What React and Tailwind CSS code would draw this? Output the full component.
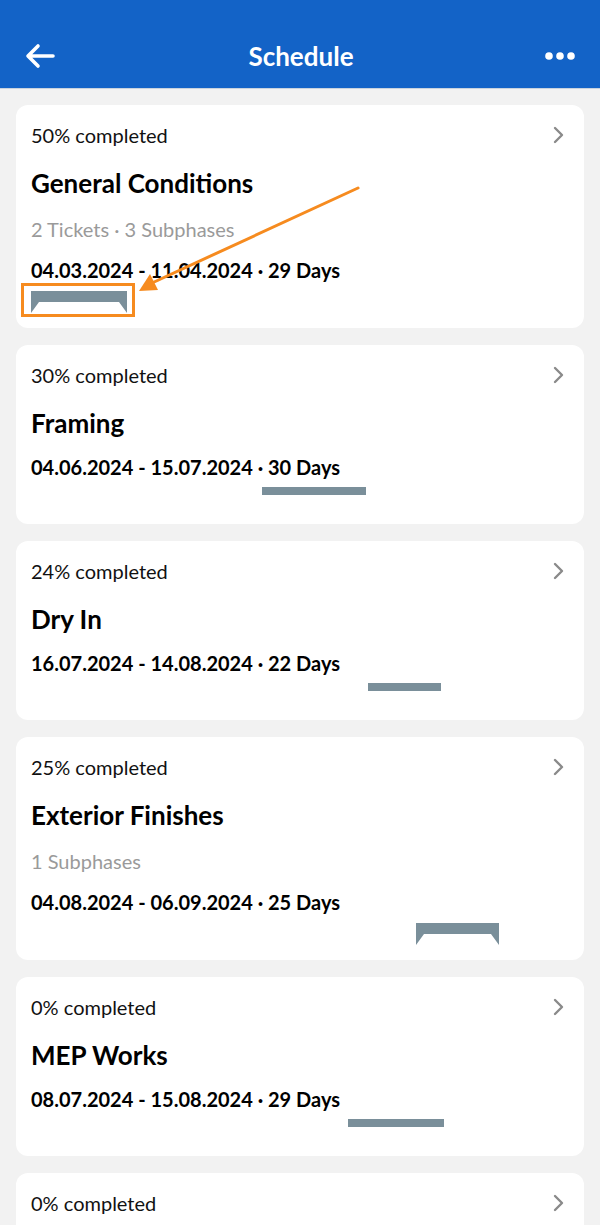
import React from 'react';

const phases = [
    { pct: 50, name: "General Conditions", meta: "2 Tickets · 3 Subphases", range: "04.03.2024 - 11.04.2024", days: 29, x: 0, w: 96, summary: true },
    { pct: 30, name: "Framing", range: "04.06.2024 - 15.07.2024", days: 30, x: 231, w: 104 },
    { pct: 24, name: "Dry In", range: "16.07.2024 - 14.08.2024", days: 22, x: 337, w: 73 },
    { pct: 25, name: "Exterior Finishes", meta: "1 Subphases", range: "04.08.2024 - 06.09.2024", days: 25, x: 385, w: 83, summary: true },
    { pct: 0, name: "MEP Works", range: "08.07.2024 - 15.08.2024", days: 29, x: 317, w: 96 },
    { pct: 0, name: "Interior Finishes", range: "16.08.2024 - 20.09.2024", days: 26, x: 421, w: 88 },
];

const Bar = ({ phase }) => {
    if (phase.summary) {
        return (
            <svg width={phase.w} height="22" viewBox={`0 0 ${phase.w} 22`} style={{ marginLeft: phase.x }} className="block">
                <path d={`M0 0 H${phase.w} V22 L${phase.w - 8} 11 H8 L0 22 Z`} fill="#7a8f9a" />
            </svg>
        );
    }
    return <div className="h-2 bg-[#7a8f9a]" style={{ marginLeft: phase.x, width: phase.w }} />;
};

const PhaseCard = ({ phase }) => (
    <div className="bg-white rounded-xl pl-[15px] pr-4 pt-[15px] pb-[15px]">
        <div className="flex items-center justify-between h-[30px]">
            <span className="text-[20px] text-[#111]">{phase.pct}% completed</span>
            <svg width="14" height="20" viewBox="0 0 14 20" className="mr-[2px]">
                <path d="M3 3 L10 10 L3 17" fill="none" stroke="#8a8a8a" strokeWidth="2.4" strokeLinecap="round" strokeLinejoin="round" />
            </svg>
        </div>
        <h2 className="mt-[17px] text-[26px] leading-8 font-bold text-black">{phase.name}</h2>
        {phase.meta && (
            <p className="mt-[18px] text-[20px] leading-6 text-[#9a9a9a]">{phase.meta}</p>
        )}
        <p className={`${phase.meta ? 'mt-[17px]' : 'mt-4'} text-[20px] leading-6 font-bold text-black`}>
            {phase.range} · {phase.days} Days
        </p>
        <div className={`${phase.meta ? 'mt-[9px]' : 'mt-2'} h-[22px]`}>
            <Bar phase={phase} />
        </div>
    </div>
);

export default function App() {
    return (
        <div className="relative min-h-screen bg-[#f2f2f2]" style={{ fontFamily: 'Lato, "Noto Sans", sans-serif' }}>
            <header className="h-[89px] bg-[#1363c7] border-b border-[#c9d3de] flex items-center justify-between px-6 pt-[24px]">
                <svg width="34" height="28" viewBox="0 0 34 28">
                    <path d="M29 14 H5 M14 4 L4 14 L14 24" fill="none" stroke="white" strokeWidth="3.6" strokeLinecap="round" strokeLinejoin="round" />
                </svg>
                <h1 className="text-white text-[26px] font-bold">Schedule</h1>
                <svg width="32" height="10" viewBox="0 0 32 10">
                    <circle cx="5" cy="5" r="3.8" fill="white" />
                    <circle cx="16" cy="5" r="3.8" fill="white" />
                    <circle cx="27" cy="5" r="3.8" fill="white" />
                </svg>
            </header>

            <main className="px-4 pt-4 pb-8 flex flex-col gap-[17px]">
                {phases.map((p, i) => <PhaseCard key={i} phase={p} />)}
            </main>

            {/* annotation overlay */}
            <svg className="absolute left-0 top-0 pointer-events-none" width="600" height="340" viewBox="0 0 600 340">
                <rect x="22.5" y="284.5" width="111" height="31" fill="none" stroke="#f68b1f" strokeWidth="3" />
                <line x1="358" y1="188" x2="152" y2="283" stroke="#f68b1f" strokeWidth="3" strokeLinecap="round" />
                <path d="M139 291 L150 274 L158 290 Z" fill="#f68b1f" />
            </svg>
        </div>
    );
}
